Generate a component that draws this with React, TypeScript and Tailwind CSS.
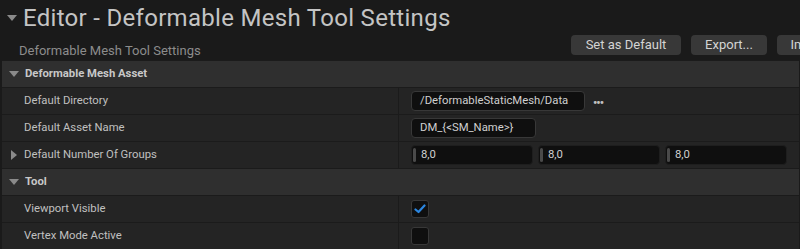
import { useState } from 'react'

function Caret({ open }: { open: boolean }) {
  return open ? (
    <svg width="10" height="6" viewBox="0 0 10 6" className="shrink-0">
      <path d="M0 0 H10 L5 6 Z" fill="#8a8a8a" />
    </svg>
  ) : (
    <svg width="6" height="10" viewBox="0 0 6 10" className="shrink-0">
      <path d="M0 0 V10 L6 5 Z" fill="#8a8a8a" />
    </svg>
  )
}

function Section({ title }: { title: string }) {
  return (
    <div className="flex h-[27px] items-center gap-[6px] border-b border-[#1b1b1b] bg-[#2f2f2f] pl-[7px] text-[11.3px] font-bold text-[#c8c8c8]">
      <Caret open />
      <span>{title}</span>
    </div>
  )
}

function Row({
  label,
  expandable,
  children,
}: {
  label: string
  expandable?: boolean
  children: React.ReactNode
}) {
  return (
    <div className="grid h-[27px] grid-cols-[396px_1px_1fr] border-b border-[#1b1b1b] bg-[#242424]">
      <div className="flex items-center text-[11.3px] text-[#c0c0c0]">
        <div className="flex w-[22px] justify-center pl-[2px]">{expandable && <Caret open={false} />}</div>
        <span>{label}</span>
      </div>
      <div className="bg-[#1b1b1b]" />
      <div className="flex items-center gap-[5px] pl-[12px]">{children}</div>
    </div>
  )
}

function TextBox({ value, width }: { value: string; width: string }) {
  return (
    <div className={`flex h-[20px] items-center rounded-[4px] border border-[#383838] bg-[#0f0f0f] pl-[8px] text-[11.3px] text-[#d0d0d0] ${width}`}>
      {value}
    </div>
  )
}

function NumBox({ value }: { value: string }) {
  return (
    <div className="flex h-[20px] w-[122px] items-center gap-[5px] rounded-[4px] border border-[#1e1e1e] bg-[#0f0f0f] pl-[1px] text-[11.3px] text-[#d0d0d0]">
      <div className="h-[14px] w-[3px] rounded-[2px] bg-[#4a4a4a]" />
      <span>{value}</span>
    </div>
  )
}

function Checkbox({ checked }: { checked: boolean }) {
  return (
    <div className="flex h-[18px] w-[18px] items-center justify-center rounded-[3px] border border-[#383838] bg-[#0f0f0f]">
      {checked && (
        <svg width="12" height="10" viewBox="0 0 12 10">
          <path d="M1.5 5.5 L4.5 8 L10.5 1.5" stroke="#2b86e0" strokeWidth="2.2" fill="none" strokeLinecap="round" strokeLinejoin="round" />
        </svg>
      )}
    </div>
  )
}

export default function App() {
  const [visible] = useState(true)
  return (
    <div className="h-[249px] w-[800px] overflow-hidden bg-[#1a1a1a] font-['Roboto',sans-serif]">
      <div className="h-[60px]">
        <div className="flex items-center gap-[6px] pl-[7px] pt-[3px]">
          <Caret open />
          <h1 className="text-[24px] leading-[30px] tracking-[0.3px] text-[#c4c4c4]">Editor - Deformable Mesh Tool Settings</h1>
        </div>
        <div className="flex items-start justify-between">
          <p className="pl-[19px] pt-[8px] text-[13px] text-[#8c8c8c]">Deformable Mesh Tool Settings</p>
          <div className="flex shrink-0 gap-[10px] pt-[2px]">
            <button className="h-[20px] w-[110px] rounded-[4px] bg-[#383838] text-[13px] text-[#d4d4d4]">Set as Default</button>
            <button className="h-[20px] w-[76px] rounded-[4px] bg-[#383838] text-[13px] text-[#d4d4d4]">Export...</button>
            <button className="h-[20px] w-[76px] -mr-[53px] rounded-[4px] bg-[#383838] text-[13px] text-[#d4d4d4]">Import...</button>
          </div>
        </div>
      </div>
      <div className="ml-[2px] mr-[1px] border-t border-[#1b1b1b]">
        <Section title="Deformable Mesh Asset" />
        <Row label="Default Directory">
          <TextBox value="/DeformableStaticMesh/Data" width="w-[174px]" />
          <span className="pl-[3px] pt-[4px] text-[12px] font-bold leading-none tracking-[-1px] text-[#c0c0c0]">•••</span>
        </Row>
        <Row label="Default Asset Name">
          <TextBox value="DM_{<SM_Name>}" width="w-[125px]" />
        </Row>
        <Row label="Default Number Of Groups" expandable>
          <NumBox value="8,0" />
          <NumBox value="8,0" />
          <NumBox value="8,0" />
        </Row>
        <Section title="Tool" />
        <Row label="Viewport Visible">
          <Checkbox checked={visible} />
        </Row>
        <Row label="Vertex Mode Active">
          <Checkbox checked={false} />
        </Row>
      </div>
    </div>
  )
}
